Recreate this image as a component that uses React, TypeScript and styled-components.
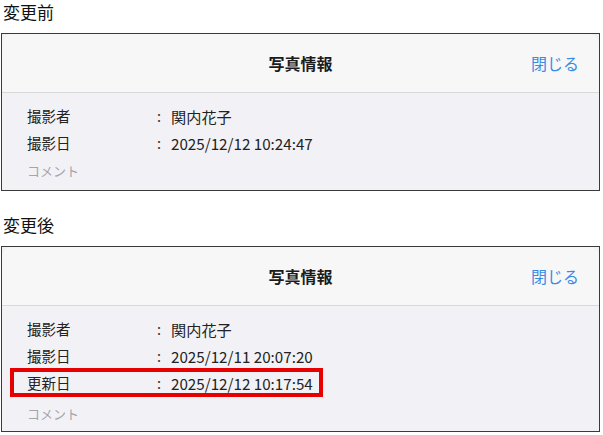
import React from "react";
import styled, { createGlobalStyle } from "styled-components";

const GlobalStyle = createGlobalStyle`
  body {
    margin: 0;
    background: #ffffff;
    font-family: "Noto Sans CJK JP", "Noto Sans", sans-serif;
    color: #222222;
  }
`;

const Page = styled.div`
  width: 603px;
  height: 435px;
  overflow: hidden;
`;

const Caption = styled.div`
  height: 33px;
  padding-left: 3px;
  font-size: 17px;
  line-height: 24px;
  color: #111111;
`;

const Panel = styled.section<{ $gapBelow?: number }>`
  margin: 0 3px ${(p) => p.$gapBelow ?? 0}px 1px;
  border: 1.5px solid #3a3a3a;
  background: #f2f2f6;
  overflow: hidden;
`;

const Header = styled.header`
  position: relative;
  height: 58px;
  display: flex;
  align-items: center;
  justify-content: center;
  background: #f7f7f7;
  border-bottom: 1px solid #d9d9d9;
  border-top-left-radius: 10px;
  border-top-right-radius: 10px;
`;

const Title = styled.h2`
  margin: 0;
  font-size: 16px;
  font-weight: 700;
  color: #1c1c1c;
`;

const CloseButton = styled.button`
  position: absolute;
  right: 20px;
  top: 50%;
  transform: translateY(-50%);
  border: 0;
  background: none;
  padding: 0;
  font-family: inherit;
  font-size: 16px;
  color: #3a8be6;
  cursor: pointer;
`;

const Body = styled.div<{ $bottom: number }>`
  padding: 9px 0 ${(p) => p.$bottom}px 0;
`;

const Row = styled.div<{ $highlight?: boolean }>`
  position: relative;
  display: grid;
  grid-template-columns: 130px 14px 1fr;
  align-items: center;
  height: 27px;
  padding-left: 25px;
  font-size: 14.5px;
  color: #222222;

  ${(p) =>
    p.$highlight &&
    `
    &::after {
      content: "";
      position: absolute;
      left: 8px;
      top: -1px;
      width: 305px;
      bottom: -1px;
      border: 4px solid #e60000;
    }
  `}
`;

const Colon = styled.span`
  color: #333333;
`;

const Value = styled.span`
  font-size: 15.2px;
`;

const Comment = styled.div<{ $top: number }>`
  margin-top: ${(p) => p.$top}px;
  padding-left: 25px;
  font-size: 13px;
  line-height: 20px;
  color: #a4a4a9;
`;

type Item = { label: string; value: string; highlight?: boolean };

const PhotoInfo: React.FC<{
  items: Item[];
  commentTop: number;
  bottom: number;
}> = ({ items, commentTop, bottom }) => (
  <>
    <Header>
      <Title>写真情報</Title>
      <CloseButton>閉じる</CloseButton>
    </Header>
    <Body $bottom={bottom}>
      {items.map((item) => (
        <Row key={item.label} $highlight={item.highlight}>
          <span>{item.label}</span>
          <Colon>:</Colon>
          <Value>{item.value}</Value>
        </Row>
      ))}
      <Comment $top={commentTop}>コメント</Comment>
    </Body>
  </>
);

const App: React.FC = () => {
  return (
    <Page>
      <GlobalStyle />
      <Caption>変更前</Caption>
      <Panel $gapBelow={22}>
        <PhotoInfo
          items={[
            { label: "撮影者", value: "関内花子" },
            { label: "撮影日", value: "2025/12/12 10:24:47" },
          ]}
          commentTop={5}
          bottom={9}
        />
      </Panel>
      <Caption>変更後</Caption>
      <Panel>
        <PhotoInfo
          items={[
            { label: "撮影者", value: "関内花子" },
            { label: "撮影日", value: "2025/12/11 20:07:20" },
            { label: "更新日", value: "2025/12/12 10:17:54", highlight: true },
          ]}
          commentTop={8}
          bottom={7}
        />
      </Panel>
    </Page>
  );
};

export default App;
